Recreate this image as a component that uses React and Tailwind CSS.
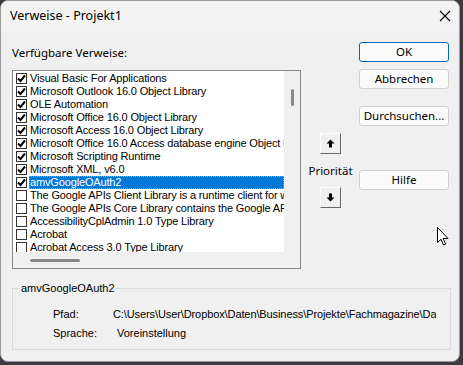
import { useState } from 'react';

const items = [
  { label: 'Visual Basic For Applications', checked: true },
  { label: 'Microsoft Outlook 16.0 Object Library', checked: true },
  { label: 'OLE Automation', checked: true },
  { label: 'Microsoft Office 16.0 Object Library', checked: true },
  { label: 'Microsoft Access 16.0 Object Library', checked: true },
  { label: 'Microsoft Office 16.0 Access database engine Object Library', checked: true },
  { label: 'Microsoft Scripting Runtime', checked: true },
  { label: 'Microsoft XML, v6.0', checked: true },
  { label: 'amvGoogleOAuth2', checked: true },
  { label: 'The Google APIs Client Library is a runtime client for working with Google services', checked: false },
  { label: 'The Google APIs Core Library contains the Google APIs', checked: false },
  { label: 'AccessibilityCplAdmin 1.0 Type Library', checked: false },
  { label: 'Acrobat', checked: false },
  { label: 'Acrobat Access 3.0 Type Library', checked: false },
];

function CheckBox({ checked }) {
  return (
    <span className="w-[11px] h-[11px] shrink-0 border border-[#333] bg-white flex items-center justify-center">
      {checked && (
        <svg width="9" height="9" viewBox="0 0 9 9">
          <path d="M1 4.5 L3.5 7 L8 1.5" fill="none" stroke="#000" strokeWidth="2" />
        </svg>
      )}
    </span>
  );
}

function WinButton({ children, primary }) {
  return (
    <button
      className={`w-[90px] h-[20px] rounded-[3px] bg-[#fbfbfb] text-[11.5px] text-black flex items-center justify-center ${
        primary ? 'border border-[#0067c0]' : 'border border-[#d0d0d0]'
      }`}
    >
      {children}
    </button>
  );
}

function ArrowButton({ down }) {
  return (
    <button className="w-[21px] h-[21px] bg-[#f0f0f0] border border-t-white border-l-white border-r-[#696969] border-b-[#696969] flex items-center justify-center">
      <svg width="9" height="9" viewBox="0 0 9 9" style={{ transform: down ? 'rotate(180deg)' : 'none' }}>
        <path d="M4.5 0.5 L8.5 4.5 L6 4.5 L6 8.5 L3 8.5 L3 4.5 L0.5 4.5 Z" fill="#000" />
      </svg>
    </button>
  );
}

export default function App() {
  const [selected] = useState(8);

  return (
    <div className="w-[463px] h-[365px] bg-[#3b3b44] overflow-hidden relative" style={{ fontFamily: '"Liberation Sans", Arial, sans-serif' }}>
      <div className="w-[460px] h-[362px] bg-[#f0f0f0] rounded-lg border border-[#9a9a9a] overflow-hidden flex flex-col">
        {/* Titelleiste */}
        <div className="h-[30px] bg-[#f3f3f3] flex items-center justify-between pl-[9px] pr-[8px] shrink-0">
          <span className="text-[12.5px] text-black" style={{ fontFamily: '"Noto Sans", sans-serif' }}>Verweise - Projekt1</span>
          <svg width="12" height="12" viewBox="0 0 12 12">
            <path d="M1 1 L11 11 M11 1 L1 11" stroke="#000" strokeWidth="1.1" />
          </svg>
        </div>

        <div className="flex pl-[11px] pt-[11px]">
          {/* linke Spalte */}
          <div className="flex flex-col w-[289px]">
            <div className="h-[28px] pt-[2px] text-[11.5px] text-black" style={{ fontFamily: '"Noto Sans", sans-serif' }}>
              Verfügbare Verweise:
            </div>
            <div className="h-[199px] border border-[#828790] flex flex-col">
              <div className="flex flex-1 min-h-0">
                <div className="w-[271px] bg-white overflow-hidden pt-[1px]">
                  {items.map((it, i) => (
                    <div key={i} className="h-[13px] flex items-center pl-[3px] text-[11px] leading-[13px] tracking-[-0.15px] text-black whitespace-nowrap">
                      <CheckBox checked={it.checked} />
                      <span
                        className={`ml-[2px] pl-[1px] h-[13px] flex-1 ${
                          i === selected ? 'bg-[#0078d7] text-white outline-1 outline-dotted outline-offset-[-1px] outline-[#f29b33]' : ''
                        }`}
                      >
                        {it.label}
                      </span>
                    </div>
                  ))}
                </div>
                <div className="w-[16px] bg-[#f0f0f0] pt-[18px] flex justify-center">
                  <div className="w-[3px] h-[17px] bg-[#8a8a8a] rounded-full ml-[1px]" />
                </div>
              </div>
              <div className="h-[16px] bg-[#f0f0f0] flex items-center pl-[17px]">
                <div className="w-[50px] h-[3px] bg-[#8a8a8a] rounded-full" />
              </div>
            </div>
          </div>

          {/* Priorität */}
          <div className="w-[58px] flex flex-col items-center pt-[91px] pl-[1px]">
            <ArrowButton />
            <div className="h-[33px] flex items-center text-[11.5px] text-black" style={{ fontFamily: '"Noto Sans", sans-serif' }}>
              Priorität
            </div>
            <ArrowButton down />
          </div>

          {/* Schaltflächen */}
          <div className="flex flex-col" style={{ fontFamily: '"Noto Sans", sans-serif' }}>
            <WinButton primary>OK</WinButton>
            <div className="h-[7px]" />
            <WinButton>Abbrechen</WinButton>
            <div className="h-[17px]" />
            <WinButton>Durchsuchen...</WinButton>
            <div className="h-[44px]" />
            <WinButton>Hilfe</WinButton>
          </div>
        </div>

        {/* Details */}
        <div className="ml-[11px] mt-[19px] w-[439px] h-[62px] border border-[#dcdcdc] relative">
          <span className="absolute left-[7px] top-[-8px] bg-[#f0f0f0] px-[1px] text-[11px] leading-[14px] text-black">amvGoogleOAuth2</span>
          <div className="pt-[16px] pl-[40px] text-[11px] text-black">
            <div className="flex h-[19px] items-center">
              <span className="w-[60px]">Pfad:</span>
              <span className="w-[323px] overflow-hidden whitespace-nowrap tracking-[-0.1px]">C:\Users\User\Dropbox\Daten\Business\Projekte\Fachmagazine\Datenbanken</span>
            </div>
            <div className="flex h-[19px] items-center">
              <span className="w-[64px]">Sprache:</span>
              <span>Voreinstellung</span>
            </div>
          </div>
        </div>
      </div>

      {/* Mauszeiger */}
      <svg className="absolute left-[437px] top-[227px]" width="12" height="19" viewBox="0 0 12 19">
        <path d="M0.5 0.5 L0.5 15.5 L4 12.3 L6.5 18 L8.6 17.1 L6.2 11.5 L11 11.5 Z" fill="#fff" stroke="#000" strokeWidth="1" />
      </svg>
    </div>
  );
}
